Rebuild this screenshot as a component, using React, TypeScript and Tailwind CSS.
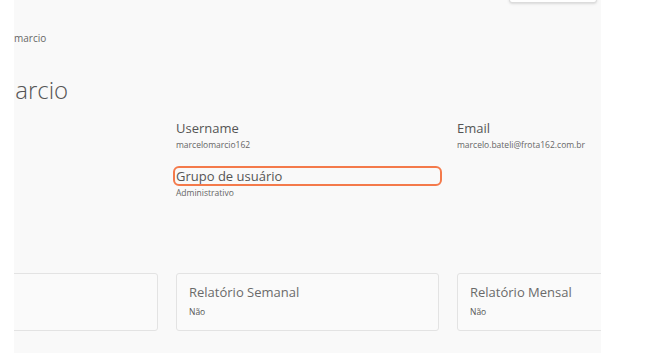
import React from 'react';

interface Field {
  label: string;
  value: string;
  focused?: boolean;
}

interface Card {
  title: string;
  value: string;
}

// three columns, the page is scrolled so the first one is mostly hidden
const columns: Field[][] = [
  [
    { label: 'Nome', value: 'Marcelo Marcio' },
    { label: 'Status', value: 'Ativo' },
  ],
  [
    { label: 'Username', value: 'marcelomarcio162' },
    { label: 'Grupo de usuário', value: 'Administrativo', focused: true },
  ],
  [{ label: 'Email', value: 'marcelo.bateli@frota162.com.br' }],
];

const cards: Card[] = [
  { title: 'Relatório Diário', value: 'Não' },
  { title: 'Relatório Semanal', value: 'Não' },
  { title: 'Relatório Mensal', value: 'Não' },
];

function FieldBlock({ field }: { field: Field }) {
  return (
    <div>
      <div
        className={`text-[13px] leading-[14px] font-medium text-[#555] whitespace-nowrap ${
          field.focused ? 'outline-2 outline-[#f47a4b] outline-offset-1 rounded-[3px]' : ''
        }`}
      >
        {field.label}
      </div>
      <div className="mt-[5px] text-[8.5px] leading-[10px] text-[#666] whitespace-nowrap">{field.value}</div>
    </div>
  );
}

export default function App() {
  return (
    <div className="w-[651px] h-[355px] bg-white overflow-hidden" style={{ fontFamily: '"Open Sans", "Noto Sans", sans-serif' }}>
      <div className="ml-[14px] w-[587px] h-[353px] bg-[#f9f9f9] overflow-hidden">
        {/* toolbar button, scrolled mostly out of view */}
        <div className="flex justify-end pr-[4px] h-[4px]">
          <div className="-mt-[28px] h-[31px] w-[88px] rounded-[3px] border border-[#dcdcdc] bg-white shadow-sm" />
        </div>

        {/* breadcrumb */}
        <div className="mt-[28px] text-[10px] leading-[12px] text-[#666]">marcio</div>

        {/* page title */}
        <h1 className="mt-[32px] -ml-[20px] text-[24px] leading-[28px] font-light text-[#555] whitespace-nowrap">
          marcio
        </h1>

        {/* user fields */}
        <div className="mt-[17px] -ml-[119px] grid grid-cols-[263px_263px_263px] gap-x-[18px]">
          {columns.map((col, i) => (
            <div key={i} className="flex flex-col gap-[19px]">
              {col.map((f) => (
                <FieldBlock key={f.label} field={f} />
              ))}
            </div>
          ))}
        </div>

        {/* report cards */}
        <div className="mt-[75px] -ml-[119px] grid grid-cols-[263px_263px_263px] gap-x-[18px]">
          {cards.map((c) => (
            <div
              key={c.title}
              className="h-[58px] rounded-[3px] border border-[#e3e3e3] bg-[#fafafa] px-[12px] pt-[11px]"
            >
              <div className="text-[13px] leading-[14px] font-medium text-[#6a6a6a] whitespace-nowrap">{c.title}</div>
              <div className="mt-[8px] text-[8.5px] leading-[10px] text-[#555]">{c.value}</div>
            </div>
          ))}
        </div>
      </div>
    </div>
  );
}
